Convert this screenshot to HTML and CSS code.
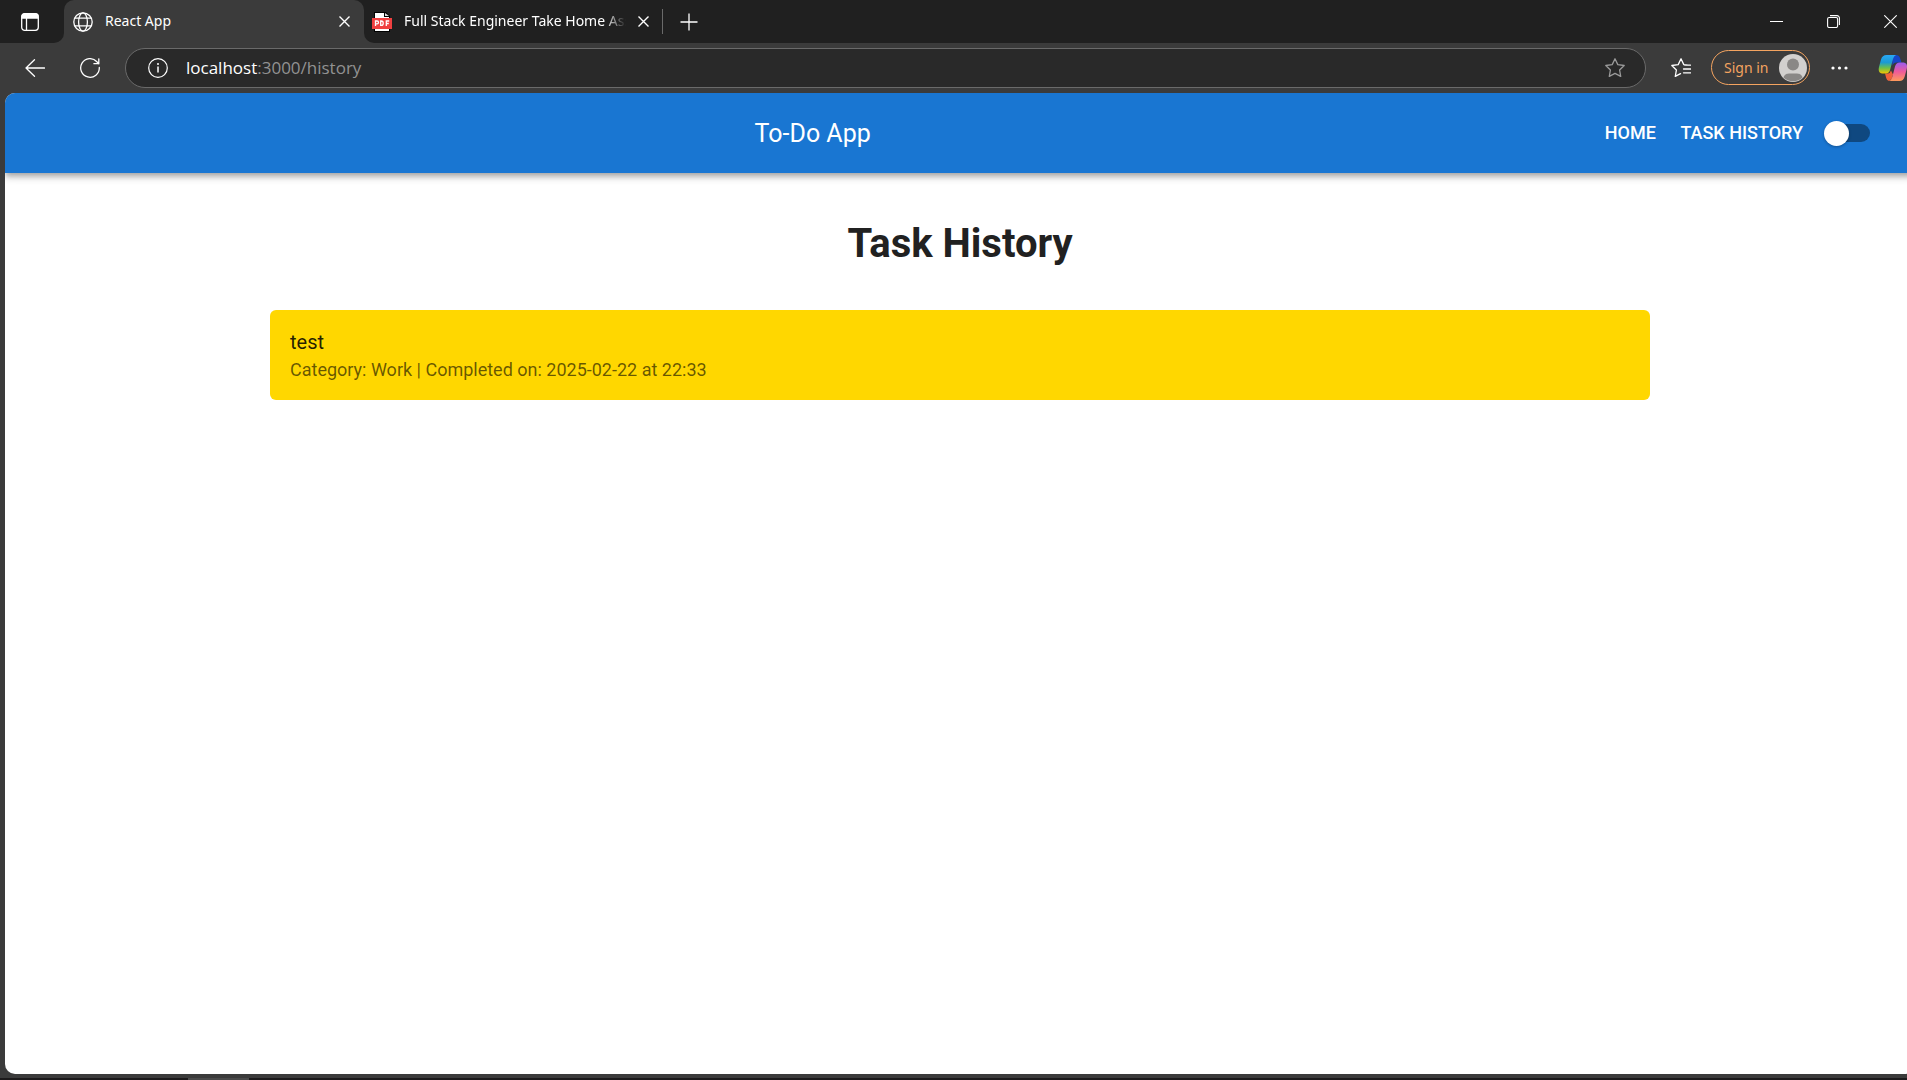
FILE: index.html
```
<!DOCTYPE html>
<html lang="en">
<head>
<meta charset="utf-8">
<meta name="viewport" content="width=device-width, initial-scale=1">
<title>React App</title>
<link rel="stylesheet" href="styles.css">
</head>
<body>
<div class="browser">
  <div class="tab-strip">
    <div class="strip-start">
      <button class="icon-button" aria-label="Tab actions">
        <svg width="18" height="18" viewBox="0 0 18 18" fill="none" stroke="#fff" stroke-width="1.3"><rect x=".7" y=".7" width="16.6" height="16.6" rx="3"/><path d="M1 3.6A2.8 2.8 0 0 1 3.8 1h10.4A2.8 2.8 0 0 1 17 3.6V5H1z" fill="#fff"/><path d="M5.5 5v12"/></svg>
      </button>
    </div>
    <div class="tab-slot">
      <div class="tab tab-active">
        <svg width="20" height="20" viewBox="0 0 20 20" fill="none" stroke="#fff" stroke-width="1.3"><circle cx="10" cy="10" r="9.2"/><ellipse cx="10" cy="10" rx="4.4" ry="9.2"/><path d="M1.8 6.2h16.4M1.8 13.8h16.4"/></svg>
        <span class="tab-title">React App</span>
        <button class="icon-button" aria-label="Close React App"><svg width="11" height="11" viewBox="0 0 11 11" stroke="#fff" stroke-width="1.4"><path d="M.5.5l10 10M10.5.5l-10 10"/></svg></button>
      </div>
    </div>
    <div class="strip-rest">
      <div class="tab tab-pdf">
        <svg width="20" height="20" viewBox="0 0 20 20"><path d="M2 0h12l4 4v16H2z" fill="#000"/><path d="M3 1h9v4h5v14H3z" fill="#fff"/><path d="M13 1l4 3h-4z" fill="#ddd"/><path d="M0 6h20v11H0z" fill="#f04040"/><path d="M3.500 14V9h1.600a1.400 1.400 0 0 1 0 2.800H3.500M8.700 9v4.400h.6a1.900 1.900 0 0 0 1.900-1.900v-.6A1.900 1.900 0 0 0 9.300 9zM14.300 14V9h2.900M14.300 11.500h2.500" fill="none" stroke="#fff" stroke-width="1.300"/></svg>
        <span class="tab-title tab-fade">Full Stack Engineer Take Home Assignment</span>
        <button class="icon-button" aria-label="Close document"><svg width="11" height="11" viewBox="0 0 11 11" stroke="#fff" stroke-width="1.4"><path d="M.5.5l10 10M10.5.5l-10 10"/></svg></button>
      </div>
      <span class="tab-divider"></span>
      <button class="icon-button new-tab" aria-label="New tab"><svg width="18" height="18" viewBox="0 0 18 18" stroke="#fff" stroke-width="1.3"><path d="M9 .5v17M.5 9h17"/></svg></button>
      <div class="window-controls">
        <button class="icon-button" aria-label="Minimize"><svg width="13" height="13" viewBox="0 0 13 13"><path d="M0 6h13v1H0z" fill="#fff"/></svg></button>
        <button class="icon-button" aria-label="Restore"><svg width="13" height="13" viewBox="0 0 13 13" fill="none" stroke="#fff" stroke-width="1.1"><rect x=".6" y="2.500" width="10" height="10" rx="1.500"/><path d="M3 .6h7a2.400 2.400 0 0 1 2.400 2.400v7"/></svg></button>
        <button class="icon-button" aria-label="Close window"><svg width="13" height="13" viewBox="0 0 13 13" stroke="#fff" stroke-width="1.1"><path d="M.3.3l12.400 12.400M12.700.3L.3 12.700"/></svg></button>
      </div>
    </div>
  </div>

  <div class="toolbar">
    <button class="icon-button" aria-label="Back"><svg width="20" height="18" viewBox="0 0 20 18" fill="none" stroke="#fff" stroke-width="1.3" stroke-linecap="round" stroke-linejoin="round"><path d="M9.500.8L1 9l8.500 8.200M1 9h18.500"/></svg></button>
    <button class="icon-button reload" aria-label="Refresh"><svg width="20" height="20" viewBox="0 0 20 20" fill="none" stroke="#fff" stroke-width="1.3" stroke-linecap="round"><path d="M19.300 9.500a9.300 9.300 0 1 1-2.400-5.800L18.800 5.700M18.800.8v4.900h-4.900"/></svg></button>
    <div class="address">
      <svg width="20" height="20" viewBox="0 0 20 20" fill="none" stroke="#fff" stroke-width="1.200"><circle cx="10" cy="10" r="9.300"/><path d="M10 8.500v6" stroke-width="1.500"/><circle cx="10" cy="6" r="1" fill="#fff" stroke="none"/></svg>
      <span class="url"><span class="url-host">localhost</span>:3000/history</span>
      <button class="icon-button" aria-label="Add to favorites"><svg width="20" height="20" viewBox="0 0 20 20" fill="none" stroke="#9a9a9a" stroke-width="1.300" stroke-linejoin="round"><path d="M10 .8l2.800 5.800 6.400.9-4.600 4.500 1.100 6.400L10 15.400l-5.700 3 1.100-6.400L.8 7.500l6.400-.9z"/></svg></button>
    </div>
    <button class="icon-button favorites" aria-label="Favorites"><svg width="20" height="20" viewBox="0 0 20 20" fill="none" stroke="#fff" stroke-width="1.300" stroke-linejoin="round" stroke-linecap="round"><path d="M17 7.200l-4.200-.6L10 .8 7.200 6.600.8 7.500l4.600 4.500-1.100 6.400L9.500 15.600M13.500 7.200h6M12.500 11h7M12.500 14.800h7"/></svg></button>
    <button class="sign-in">Sign in
      <svg width="28" height="28" viewBox="0 0 28 28"><circle cx="14" cy="14" r="14" fill="#d2d0ce"/><circle cx="14" cy="10.500" r="6" fill="#8a8886"/><path d="M4.500 23.500C5.500 20 8 19.500 11 19.500h6c3 0 5.500.5 6.500 4a14 14 0 0 1-19 0z" fill="#8a8886"/></svg>
    </button>
    <button class="icon-button more" aria-label="Settings and more"><svg width="17" height="4" viewBox="0 0 17 4" fill="#fff"><circle cx="2" cy="2" r="1.600"/><circle cx="8.500" cy="2" r="1.600"/><circle cx="15" cy="2" r="1.600"/></svg></button>
    <button class="icon-button" aria-label="Copilot"><svg width="30" height="28" viewBox="0 0 30 28">
      <defs>
        <linearGradient id="cool" x1="0" y1="0" x2="0" y2="1"><stop offset="0" stop-color="#2aa8f4"/><stop offset=".4" stop-color="#1a9ad6"/><stop offset=".7" stop-color="#6cc04a"/><stop offset="1" stop-color="#f5c400"/></linearGradient>
        <linearGradient id="warm" x1="0" y1="0" x2="0" y2="1"><stop offset="0" stop-color="#9b5cf0"/><stop offset=".5" stop-color="#ee5a9a"/><stop offset="1" stop-color="#ff9a5a"/></linearGradient>
      </defs>
      <path d="M14 1h4q3 0 4 3l1.500 4.500h-5q-3 0-4 3z" fill="#1646c8"/>
      <path d="M11 27q-2 0-2.800-3L7 19.500h3q2 0 3-3l2 4-1.500 4.500z" fill="#f0603a"/>
      <path d="M8.500 1H18q-2.200.8-3 4l-2.800 10.500Q11.200 19.500 8 19.500H4Q-.3 19 1 13l2-7.500Q4.300 1 8.500 1z" fill="url(#cool)"/>
      <path d="M21.500 27H11q2.500-.8 3.300-4l2.700-10.500q1.200-4 4.700-4h4q4.300.5 3 6.500l-2 7.500q-1.300 4.500-5.200 4.500z" fill="url(#warm)"/>
    </svg></button>
  </div>

  <div class="page">
    <header class="app-bar">
      <div class="app-title">To-Do App</div>
      <nav class="app-nav">
        <a class="nav-link" href="#home">HOME</a>
        <a class="nav-link" href="#history">TASK HISTORY</a>
      </nav>
      <input class="switch" type="checkbox" role="switch" aria-label="Dark mode">
    </header>
    <main class="content">
      <h1 class="heading">Task History</h1>
      <ul class="tasks">
        <li class="task">
          <div class="task-name">test</div>
          <div class="task-meta">Category: Work | Completed on: 2025-02-22 at 22:33</div>
        </li>
      </ul>
    </main>
  </div>
  <div class="taskbar"><span class="taskbar-item"></span></div>
</div>
</body>
</html>
```
FILE: styles.css
```
* { box-sizing: border-box; }
body { margin: 0; overflow: hidden; background: #3b3b3b; font-family: Roboto, sans-serif; }
svg { display: block; flex: none; }
button { font: inherit; color: inherit; cursor: pointer; }
.browser { display: flex; flex-direction: column; height: 100vh; }
.icon-button { display: flex; align-items: center; justify-content: center; flex: none; padding: 0; border: 0; background: none; }

.tab-strip { display: flex; height: 43px; color: #fff; font: 14px "Noto Sans", sans-serif; }
.strip-start { width: 64px; padding-left: 21px; display: flex; align-items: center; background: #202020; border-radius: 0 0 10px 0; }
.tab-slot { width: 300px; background: linear-gradient(#202020 50%, #3b3b3b 50%); }
.tab { display: flex; align-items: center; height: 43px; gap: 12px; }
.tab-active { padding: 0 14px 0 9px; background: #3b3b3b; border-radius: 10px 10px 0 0; }
.tab-title { flex: 1; padding-bottom: 2px; overflow: hidden; white-space: nowrap; }
.tab-fade { -webkit-mask-image: linear-gradient(to right, #000 90%, transparent); mask-image: linear-gradient(to right, #000 90%, transparent); }
.strip-rest { flex: 1; display: flex; align-items: center; background: #202020; border-radius: 0 0 0 10px; }
.tab-pdf { width: 298px; padding: 0 13px 0 8px; }
.tab-divider { width: 1px; height: 25px; background: #6a6a6a; }
.new-tab { margin-left: 17px; }
.window-controls { display: flex; gap: 44px; margin-left: auto; padding-right: 10px; }

.toolbar { display: flex; align-items: center; height: 50px; padding-left: 25px; }
.reload { margin-left: 35px; }
.address { flex: 1; display: flex; align-items: center; gap: 18px; height: 40px; margin-left: 25px; padding: 0 20px 0 22px; border: 1px solid #6a6a6a; border-radius: 20px; background: #292929; }
.url { flex: 1; padding-bottom: 1px; color: #929292; font: 17px "Open Sans", sans-serif; }
.url-host { color: #fff; }
.favorites { margin-left: 25px; }
.sign-in { display: flex; align-items: center; justify-content: space-between; width: 99px; height: 35px; margin: 0 0 1px 20px; padding: 0 2px 0 12px; border: 1px solid #f4a460; border-radius: 18px; background: none; color: #f4a460; font: 14px "Noto Sans", sans-serif; }
.more { margin: 0 30px 0 21px; }
.toolbar > :last-child { margin-right: -1px; }

.page { flex: 1; margin: 0 -8px 4px 5px; overflow: hidden; border-radius: 10px; background: #fff; }
.app-bar { display: flex; align-items: center; height: 80px; padding: 0 30px; background: #1976d2; color: #fff; box-shadow: 0 3px 5px -1px rgba(0,0,0,.2), 0 5px 6px rgba(0,0,0,.14), 0 1px 12px rgba(0,0,0,.12); }
.app-title { flex: 1; text-align: center; font-size: 25px; }
.app-nav { display: flex; }
.nav-link { min-width: 80px; padding: 8px 10px; color: inherit; font-size: 18px; font-weight: 500; line-height: 30px; text-align: center; text-decoration: none; }
.switch { appearance: none; display: flex; align-items: center; flex: none; width: 42px; height: 18px; margin: 0 15px; border-radius: 9px; background: #0f4880; cursor: pointer; }
.switch::before { content: ""; width: 25px; height: 25px; margin-left: -4px; flex: none; border-radius: 50%; background: #fff; box-shadow: 0 1px 3px rgba(0,0,0,.3); }
.switch:checked::before { margin-left: 21px; }
.content { max-width: 1500px; margin: 0 auto; padding: 41px 60px; }
.heading { margin: 0 0 36px; color: #212121; font-size: 40px; font-weight: 700; line-height: 60px; text-align: center; }
.tasks { margin: 0; padding: 0; list-style: none; }
.task { padding: 17px 20px 18px; border-radius: 6px; background: #ffd700; }
.task-name { color: rgba(0,0,0,.87); font-size: 20px; line-height: 30px; }
.task-meta { color: rgba(0,0,0,.6); font-size: 18px; line-height: 25px; }
.taskbar { display: flex; height: 2px; padding-left: 188px; background: #1c1a1b; }
.taskbar-item { width: 61px; background: #4a4a4a; }
```
